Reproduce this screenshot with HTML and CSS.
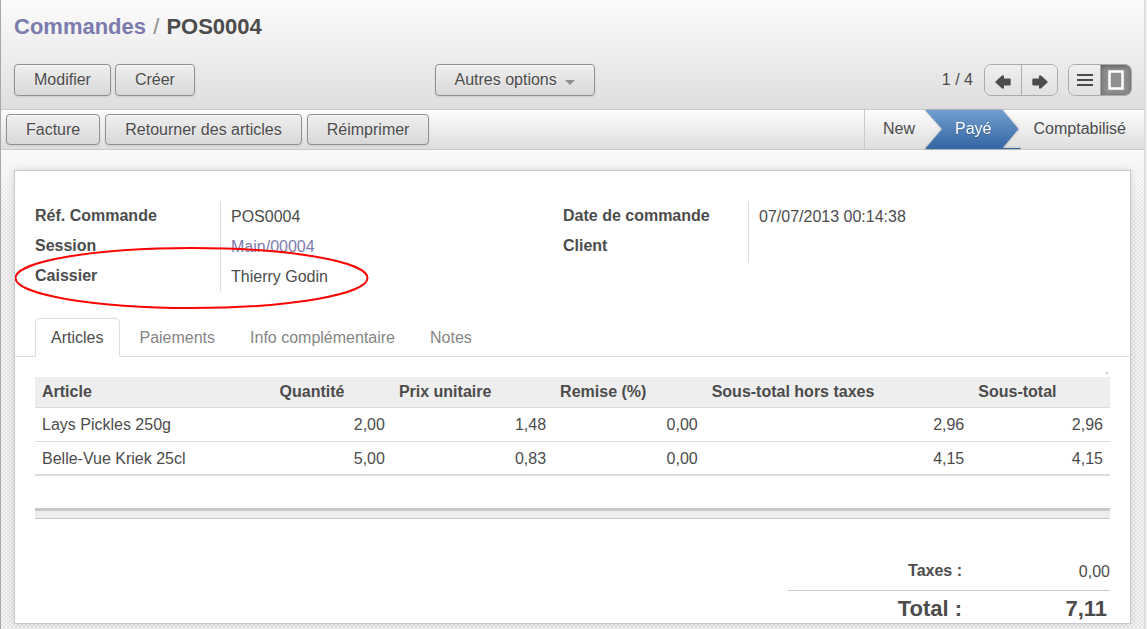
FILE: index.html
```html
<!DOCTYPE html>
<html lang="fr">
<head>
<meta charset="utf-8">
<meta name="viewport" content="width=device-width, initial-scale=1">
<title>Commandes / POS0004</title>
<link rel="stylesheet" href="styles.css">
</head>
<body>
<div class="app">
  <header class="header">
    <h1 class="title"><a href="#">Commandes</a> <span class="slash">/</span> POS0004</h1>
    <div class="controls">
      <div class="actions">
        <button class="btn" type="button">Modifier</button>
        <button class="btn" type="button">Créer</button>
      </div>
      <button class="btn btn-menu" type="button">Autres options <span class="caret"></span></button>
      <div class="nav">
        <span class="pager-count">1 / 4</span>
        <div class="group pager">
          <button type="button" aria-label="Précédent"><svg width="16" height="14" viewBox="0 0 16 14"><path d="M0 7 7 .5H9V3.500h5.500a1.200 1.200 0 0 1 1.200 1.200v4.600a1.200 1.200 0 0 1-1.200 1.200H9v3H7z" fill="#4c4c4c"/></svg></button>
          <button type="button" aria-label="Suivant"><svg width="16" height="14" viewBox="0 0 16 14"><path d="M16 7 9 .5H7V3.500H1.500A1.200 1.200 0 0 0 .3 4.700v4.600a1.200 1.200 0 0 0 1.200 1.200H7v3h2z" fill="#4c4c4c"/></svg></button>
        </div>
        <div class="group views">
          <button type="button" aria-label="Liste"><svg width="16" height="12" viewBox="0 0 16 12"><path d="M0 0h16v2H0zM0 5h16v2H0zM0 10h16v2H0z" fill="#4c4c4c"/></svg></button>
          <button class="on" type="button" aria-label="Formulaire"><svg width="16" height="20" viewBox="0 0 16 20"><rect x="1.500" y="1.500" width="13" height="17" fill="none" stroke="#fff" stroke-width="2.500"/></svg></button>
        </div>
      </div>
    </div>
  </header>
  <div class="toolbar">
    <div class="tools">
      <button class="btn" type="button">Facture</button>
      <button class="btn" type="button">Retourner des articles</button>
      <button class="btn" type="button">Réimprimer</button>
    </div>
    <ol class="status">
      <li class="step step-first">New</li>
      <li class="step step-active" aria-current="step">Payé</li>
      <li class="step step-last">Comptabilisé</li>
    </ol>
  </div>
  <main class="content">
    <section class="sheet">
      <div class="fields">
        <dl class="field-group">
          <dt>Réf. Commande</dt><dd>POS0004</dd>
          <dt>Session</dt><dd><a href="#">Main/00004</a></dd>
          <dt>Caissier</dt><dd>Thierry Godin</dd>
        </dl>
        <dl class="field-group">
          <dt>Date de commande</dt><dd>07/07/2013 00:14:38</dd>
          <dt>Client</dt><dd></dd>
        </dl>
        <svg class="highlight" width="354" height="62" viewBox="0 0 354 62" aria-hidden="true"><ellipse cx="176.500" cy="31" rx="176" ry="30" fill="none" stroke="#fb0505" stroke-width="2"/></svg>
      </div>
      <div class="tabs" role="tablist">
        <button class="tab tab-on" type="button" role="tab" aria-selected="true">Articles</button>
        <button class="tab" type="button" role="tab">Paiements</button>
        <button class="tab" type="button" role="tab">Info complémentaire</button>
        <button class="tab" type="button" role="tab">Notes</button>
      </div>
      <div class="panel">
        <span class="dot">.</span>
        <table class="lines">
          <colgroup><col class="c-article"><col class="c-qty"><col class="c-price"><col class="c-discount"><col class="c-net"><col class="c-total"></colgroup>
          <thead>
            <tr><th>Article</th><th>Quantité</th><th>Prix unitaire</th><th>Remise (%)</th><th>Sous-total hors taxes</th><th>Sous-total</th></tr>
          </thead>
          <tbody>
            <tr><td>Lays Pickles 250g</td><td>2,00</td><td>1,48</td><td>0,00</td><td>2,96</td><td>2,96</td></tr>
            <tr><td>Belle-Vue Kriek 25cl</td><td>5,00</td><td>0,83</td><td>0,00</td><td>4,15</td><td>4,15</td></tr>
          </tbody>
        </table>
        <div class="table-foot"></div>
        <dl class="totals">
          <dt>Taxes :</dt><dd>0,00</dd>
          <dt class="grand">Total :</dt><dd class="grand">7,11</dd>
        </dl>
      </div>
    </section>
  </main>
</div>
</body>
</html>
```
FILE: styles.css
```css
* { box-sizing: border-box; }

body {
  margin: 0;
  padding-right: 2px;
  background: #ececec;
  color: #4c4c4c;
  font: 16px/20px "Liberation Sans", Arial, sans-serif;
}

button { font: inherit; color: inherit; margin: 0; cursor: pointer; }
a { color: #7c7bad; text-decoration: none; }
dl, dd, ol { margin: 0; padding: 0; }

.app {
  display: flex;
  flex-direction: column;
  min-height: 100vh;
  border-left: 1px solid #a8a8a8;
  border-right: 1px solid #d6d6d6;
}

/* Header */
.header {
  padding: 12px 12px 13px 13px;
  background: linear-gradient(#fcfcfc, #dedede);
  border-bottom: 1px solid #cacaca;
}
.title { margin: 0 0 22px; font-size: 22px; line-height: 30px; }
.slash { margin: 0 1px; color: #8c8c8c; font-weight: normal; }
.controls { display: flex; align-items: center; }
.actions { display: flex; gap: 4px; width: 37.7%; }
.btn {
  height: 32px;
  padding: 0 19px;
  border: 1px solid #8f8f8f;
  border-radius: 4px;
  background: linear-gradient(#efefef, #d8d8d8);
  box-shadow: 0 1px 2px rgba(0, 0, 0, .1), inset 0 1px 1px rgba(255, 255, 255, .8);
  text-shadow: 0 1px 1px rgba(255, 255, 255, .5);
  white-space: nowrap;
}
.btn-menu { padding-left: 18px; }
.caret {
  display: inline-block;
  margin-left: 4px;
  border: 5px solid transparent;
  border-top-color: #8f8f8f;
  border-bottom: 0;
}
.nav { display: flex; align-items: center; margin-left: auto; }
.pager-count { margin-right: 11px; }
.group {
  display: flex;
  height: 32px;
  border: 1px solid #ababab;
  border-radius: 7px;
  overflow: hidden;
}
.group button {
  display: flex;
  align-items: center;
  justify-content: center;
  padding: 0;
  border: 0;
  background: linear-gradient(#efefef, #e0e0e0);
}
.group button + button { border-left: 1px solid #ababab; }
.pager { margin-right: 10px; }
.pager button { width: 36px; padding-top: 4px; }
.views button { width: 31px; }
.views .on { background: #8f8f8f; box-shadow: inset 0 1px 5px rgba(0, 0, 0, .4); }

/* Action bar */
.toolbar {
  display: flex;
  justify-content: space-between;
  height: 40px;
  background: linear-gradient(#fcfcfc, #dedede);
  border-bottom: 1px solid #cacaca;
}
.tools { display: flex; gap: 5px; padding: 4px 5px; }
.tools .btn { height: 31px; }
.status { display: flex; list-style: none; border-left: 1px solid #cacaca; line-height: 38px; }
.step-first { padding: 0 10px 0 18px; }
.step-last { padding: 0 18px 0 13px; }
.step-active {
  position: relative;
  z-index: 0;
  padding: 0 29px 0 30px;
  color: #fff;
  text-shadow: 0 1px 1px rgba(0, 0, 0, .3);
  filter: drop-shadow(0 0 1px rgba(0, 0, 0, .3));
}
.step-active::before {
  content: "";
  position: absolute;
  z-index: -1;
  inset: 0;
  background: linear-gradient(#729fcf, #3465a4);
  clip-path: polygon(0 0, calc(100% - 18px) 0, calc(100% - 2px) 19px, calc(100% - 18px) 38px, 100% 38px, 100% 100%, 0 100%, 17px 19px);
}

/* Sheet */
.content {
  flex: 1;
  padding: 20px 13px 5px;
  background:
    linear-gradient(rgba(255, 255, 255, .7), rgba(255, 255, 255, 0) 70px),
    conic-gradient(#e5e5e5 25%, #f3f3f3 0 50%, #e5e5e5 0 75%, #f3f3f3 0) 0 0 / 4px 4px;
}
.sheet {
  padding-top: 31px;
  background: #fff;
  border: 1px solid #c8c8d3;
  box-shadow: 0 0 8px rgba(0, 0, 0, .12);
}
.fields {
  position: relative;
  display: grid;
  grid-template-columns: 528fr 547fr;
  align-items: start;
  margin: 0 20px 26px;
}
.field-group { display: grid; grid-template-columns: 185px 1fr; grid-auto-rows: 30px; }
.field-group dt { font-weight: bold; line-height: 28px; }
.field-group dd { padding-left: 10px; border-left: 1px solid #ddd; line-height: 30px; }
.highlight { position: absolute; left: -20px; top: 45px; }

.tabs { display: flex; gap: 3px; height: 39px; padding: 0 20px; border-bottom: 1px solid #ddd; }
.tab {
  height: 39px;
  padding: 0 15px;
  border: 1px solid transparent;
  border-radius: 5px 5px 0 0;
  background: none;
  color: #858585;
}
.tab-on { padding-right: 16px; border-color: #ddd; border-bottom-color: #fff; background: #fff; color: #4c4c4c; }

.panel { position: relative; padding: 20px 20px 0; }
.dot { position: absolute; right: 21px; top: 2px; color: #b0b0b0; }
.lines { width: 100%; table-layout: fixed; border-collapse: separate; border-spacing: 0; border-bottom: 1px solid #ddd; }
.c-article { width: 22.1%; }
.c-qty { width: 11.1%; }
.c-price { width: 15%; }
.c-discount { width: 14.1%; }
.c-net { width: 24.8%; }
.c-total { width: 12.9%; }
.lines th { height: 31px; padding: 0 7px; background: #eee; border-bottom: 1px solid #dcdcdc; text-align: left; }
.lines td { height: 34px; padding: 0 7px; border-bottom: 1px solid #dcdcdc; text-align: right; }
.lines tbody tr:last-child td { height: 33px; padding-top: 1px; }
.lines td:first-child { text-align: left; }
.table-foot { height: 11px; margin-top: 32px; background: #eee; border-top: 3px solid #c8c8c8; border-bottom: 1px solid #c8c8c8; }

.totals { display: grid; grid-template-columns: 1fr 148px; width: 30%; margin: 34px 0 0 auto; text-align: right; }
.totals dt { font-weight: bold; line-height: 36px; }
.totals dd { line-height: 37px; }
.totals .grand {
  padding-top: 4px;
  border-top: 1px solid #cacaca;
  font-size: 22px;
  font-weight: bold;
  line-height: 28px;
}
.totals dd.grand { padding-right: 3px; }
```
